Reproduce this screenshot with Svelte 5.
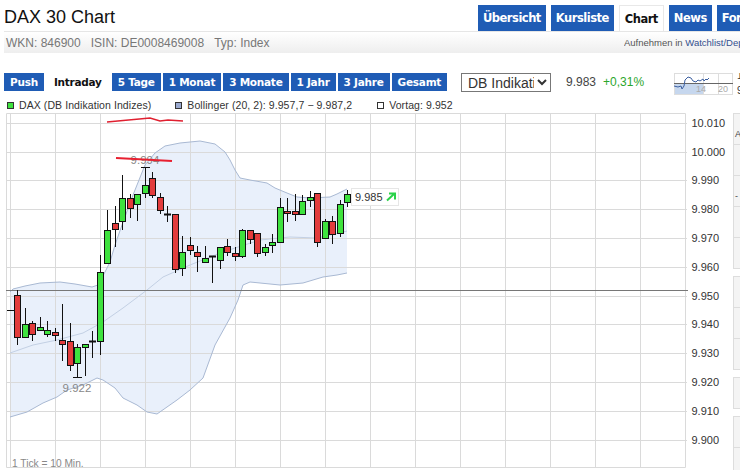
<script lang="ts">
	type Candle = [number, number, number, number, number, 'g' | 'r' | 'k'];

	const periods = ['Push', 'Intraday', '5 Tage', '1 Monat', '3 Monate', '1 Jahr', '3 Jahre', 'Gesamt'];
	const tabs = ['Übersicht', 'Kursliste', 'Chart', 'News', 'Forum'];

	const value = (v: number) => 151.5 + (10000 - v) * 2.88;
	const ticks = [10010, 10000, 9990, 9980, 9970, 9960, 9950, 9940, 9930, 9920, 9910, 9900];
	const fmt = (v: number) => String(v).replace(/(\d)(\d{3})$/, '$1.$2');
	const verticals = Array.from({ length: 15 }, (_, i) => 10 + i * 45);

	// x, wick top, wick bottom, body top, body bottom, colour
	const candles: Candle[] = [
		[17, 290, 345, 295, 337, 'r'],
		[25, 308, 337, 324, 337, 'g'],
		[32, 321, 341, 323, 334, 'r'],
		[40, 317, 331, 327, 330, 'g'],
		[47, 321, 337, 330, 334, 'g'],
		[55, 328, 341, 332, 335, 'r'],
		[62, 304, 361, 340, 344, 'r'],
		[70, 323, 371, 341, 365, 'r'],
		[77, 344, 377, 347, 363, 'g'],
		[85, 344, 376, 344, 347, 'g'],
		[92, 331, 358, 341, 341, 'k'],
		[100, 255, 355, 272, 341, 'g'],
		[107, 210, 263, 230, 263, 'g'],
		[115, 206, 247, 223, 229, 'r'],
		[122, 175, 230, 198, 221, 'g'],
		[130, 194, 218, 198, 208, 'r'],
		[137, 194, 221, 194, 204, 'g'],
		[145, 167, 198, 185, 193, 'g'],
		[152, 172, 198, 178, 195, 'r'],
		[160, 193, 214, 197, 210, 'r'],
		[167, 206, 222, 214, 214, 'k'],
		[175, 214, 273, 214, 269, 'r'],
		[182, 236, 276, 252, 268, 'g'],
		[190, 237, 255, 245, 250, 'r'],
		[197, 246, 272, 252, 256, 'r'],
		[205, 246, 262, 258, 262, 'g'],
		[212, 256, 283, 256, 256, 'k'],
		[220, 247, 269, 247, 260, 'g'],
		[227, 239, 256, 246, 252, 'r'],
		[235, 247, 261, 253, 256, 'r'],
		[242, 229, 258, 230, 256, 'g'],
		[250, 230, 244, 230, 239, 'r'],
		[257, 233, 257, 233, 253, 'r'],
		[265, 244, 256, 247, 252, 'g'],
		[272, 234, 253, 242, 245, 'g'],
		[280, 198, 242, 207, 242, 'g'],
		[287, 198, 222, 211, 213, 'r'],
		[295, 194, 221, 211, 214, 'r'],
		[302, 195, 214, 201, 214, 'g'],
		[310, 191, 207, 197, 200, 'g'],
		[317, 193, 247, 193, 242, 'r'],
		[325, 219, 238, 221, 238, 'g'],
		[332, 216, 244, 221, 234, 'r'],
		[340, 200, 237, 204, 233, 'g'],
		[347, 190, 207, 194, 202, 'g']
	];

	const upper =
		'10,292 13,289 25,286 40,283 60,282 75,284 92,287 98,285 105,272 110,262 115,245 122,225 133,195 145,165 155,153 165,146 180,143 200,141 215,144 225,152 230,160 235,170 240,178 250,180 267,183 275,188 287,193 297,197 310,198 330,197 337,194 347,189';
	const lower =
		'347,273 337,275 323,277 303,283 280,285 250,282 243,285 238,300 230,318 215,345 203,378 190,390 177,400 167,407 157,414 147,412 137,405 123,398 115,388 103,380 97,378 83,385 67,390 57,397 43,403 27,412 10,417';
	const middle =
		'10,353 33,345 57,340 83,333 103,322 123,308 147,290 163,277 190,265 215,255 235,248 260,240 290,237 317,238 343,232 347,231';
</script>

<div class="page">
	<header class="title-row">
		<h1>DAX 30 Chart</h1>
		<nav class="tabs">
			{#each tabs as t}
				<span class="tab" class:on={t === 'Chart'}>{t}</span>
			{/each}
		</nav>
	</header>

	<div class="info">
		<div class="codes">
			<span>WKN: 846900</span>
			<span>ISIN: DE0008469008</span>
			<span>Typ: Index</span>
		</div>
		<div class="watch">Aufnehmen in <span class="link">Watchlist/Depot</span></div>
	</div>

	<div class="toolbar">
		<div class="periods">
			{#each periods as p}
				<span class="period" class:on={p === 'Intraday'}>{p}</span>
			{/each}
		</div>
		<select class="source">
			<option>DB Indikation</option>
		</select>
		<span class="last">9.983</span>
		<span class="change">+0,31%</span>
		<svg class="mini" viewBox="0 0 66 22" width="66" height="22">
			<rect x="0" y="11" width="29" height="11" fill="#c6d7ee" />
			<path d="M0 .5H59M0 21.5H59M.5 0V22M29.5 0V22M44.5 0V22M58.5 0V22" stroke="#ddd" fill="none" />
			<path d="M0 10.5H59" stroke="#666" fill="none" />
			<path
				d="M0 13l4 1 3-1 1 3 2-3 1-6 3-3 3 1 2 3 3 1 2-2 2 1 3-2 1 2 2-2 1 1 2-2"
				stroke="#3c5fa0"
				fill="none"
			/>
			<text x="22" y="19" class="mini-label">14</text>
			<text x="44" y="19" class="mini-label">20</text>
			<text x="63" y="6" class="mini-scale">1</text>
			<text x="63" y="21" class="mini-scale">9</text>
		</svg>
	</div>

	<div class="legend">
		<span class="item"><i class="sq dax"></i>DAX (DB Indikation Indizes)</span>
		<span class="item boll"><i class="sq bb"></i>Bollinger (20, 2): 9.957,7 − 9.987,2</span>
		<span class="item prev"><i class="sq pv"></i>Vortag: 9.952</span>
	</div>

	<div class="chart-row">
		<svg class="chart" viewBox="0 113 733 357" width="733" height="357">
			<polygon points="{upper} {lower}" fill="#e9f0fb" />

			<g stroke="#dadada" fill="none">
				{#each ticks as t}
					<line x1="6" x2="687" y1={Math.round(value(t)) + 0.5} y2={Math.round(value(t)) + 0.5} />
				{/each}
				{#each verticals as x}
					<line x1={x + 0.5} x2={x + 0.5} y1="113" y2="467" />
				{/each}
				<path d="M6.5 467.5V113.5H685.5V467.5H6.5" />
			</g>

			<polyline points={upper} fill="none" stroke="#a9b9d3" />
			<polyline points={lower} fill="none" stroke="#a9b9d3" />
			<polyline points={middle} fill="none" stroke="#c3d0e4" />

			<line x1="6" x2="688" y1="290.5" y2="290.5" stroke="#777" />

			<path d="M7 310.5H14M73 377.5H82M141 167.5H150" stroke="#111" fill="none" />

			{#each candles as [x, wt, wb, bt, bb, c]}
				<line x1={x + 0.5} x2={x + 0.5} y1={wt} y2={wb} stroke="#111" />
				{#if c === 'k'}
					<line x1={x - 3} x2={x + 4} y1={bt + 0.5} y2={bt + 0.5} stroke="#111" stroke-width="2" />
				{:else}
					<rect
						x={x - 2.5}
						y={bt + 0.5}
						width="6"
						height={bb - bt}
						fill={c === 'g' ? '#3ee23e' : '#e23c3c'}
						stroke="#111"
					/>
				{/if}
			{/each}

			<text x="145" y="164" class="note" text-anchor="middle">9.994</text>
			<text x="77" y="392" class="note" text-anchor="middle">9.922</text>
			<text x="12" y="467" class="tick-note">1 Tick = 10 Min.</text>

			<path d="M107 122Q128 120 150 118L160 121 168 120 183 121" stroke="#e02030" stroke-width="1.5" fill="none" />
			<path d="M116 158L172 161" stroke="#e82030" stroke-width="2" fill="none" />

			<rect x="351.5" y="188.5" width="47" height="17" fill="#fff" stroke="#e6e6e6" />
			<text x="355" y="201" class="axis">9.985</text>
			<path d="M387 200.5L394 194M389 193.5H395V199.5" stroke="#2bd24a" stroke-width="2" fill="none" />

			{#each ticks as t}
				<text x="691.5" y={value(t) + 4} class="axis">{fmt(t)}</text>
			{/each}
		</svg>
		<aside class="side">
			<div class="side-box">
				<span class="row mark">A</span>
				<span class="row"></span>
				<span class="row mark">-</span>
				<span class="row"></span>
				<span class="row"></span>
			</div>
			<div class="side-box">
				<span class="row"></span>
				<span class="row"></span>
				<span class="row"></span>
			</div>
			<div class="side-box">
				<span class="row"></span>
			</div>
			<div class="side-box">
				<span class="row"></span>
				<span class="row"></span>
			</div>
		</aside>
	</div>
</div>

<style>
	:global(body) {
		margin: 0;
		background: #fff;
		font-family: "Liberation Sans", Arial, sans-serif;
		color: #222;
	}
	.page {
		width: 740px;
		height: 470px;
		overflow: hidden;
	}

	.title-row {
		display: flex;
		height: 31px;
		padding: 5px 0 0 4px;
		box-sizing: border-box;
		overflow: hidden;
	}
	h1 {
		flex: none;
		width: 474px;
		margin: 0;
		font-size: 18px;
		font-weight: 400;
		line-height: 24px;
		color: #111;
	}
	.tabs {
		display: flex;
		gap: 5px;
		flex: none;
	}
	.tab {
		display: flex;
		align-items: center;
		height: 26px;
		padding: 0 5px;
		background: #1f5cb5;
		color: #fff;
		font: bold 11.5px "DejaVu Sans", Verdana, sans-serif;
		letter-spacing: -0.5px;
	}
	.tab.on {
		background: #fff;
		color: #111;
		border: 1px solid #e8e8e8;
		border-bottom: 0;
		box-sizing: border-box;
		height: 27px;
	}

	.info {
		display: flex;
		justify-content: space-between;
		align-items: center;
		height: 21px;
		margin-left: 4px;
		padding: 0 0 0 2px;
		border-top: 1px solid #e6e6e6;
		background: linear-gradient(#fff, #eee);
		color: #777;
	}
	.codes {
		display: flex;
		gap: 10px;
		font-size: 12px;
	}
	.watch {
		font-size: 9.5px;
		color: #555;
		width: 116px;
		white-space: nowrap;
		overflow: hidden;
	}
	.link {
		color: #34508f;
	}

	.toolbar {
		display: flex;
		align-items: flex-start;
		height: 24px;
		margin-top: 20px;
		padding-left: 4px;
		white-space: nowrap;
	}
	.periods {
		display: flex;
		gap: 2px;
		width: 457px;
		flex: none;
	}
	.period {
		display: flex;
		align-items: center;
		height: 18px;
		padding: 0 6px;
		background: #1f5cb5;
		color: #fff;
		font: bold 10.5px "DejaVu Sans", Verdana, sans-serif;
		letter-spacing: -0.25px;
	}
	.period.on {
		padding: 0 8px;
		background: #fff;
		color: #111;
	}
	.source {
		width: 90px;
		height: 19px;
		padding: 0 0 0 2px;
		border: 1px solid #777;
		border-radius: 0;
		background: #fff;
		color: #333;
		font: 14px "Liberation Sans", Arial, sans-serif;
	}
	.last,
	.change {
		font-size: 12px;
		line-height: 18px;
		color: #444;
	}
	.last {
		margin-left: 15px;
	}
	.change {
		margin-left: 7px;
		color: #2ca62c;
	}
	.mini {
		flex: none;
		margin-left: 30px;
	}
	.mini-label {
		font-size: 9px;
		fill: #aaa;
	}
	.mini-scale {
		font-size: 10px;
		fill: #333;
	}

	.legend {
		display: flex;
		align-items: center;
		height: 16px;
		padding-left: 7px;
		font-size: 10.5px;
		letter-spacing: 0.08px;
		color: #333;
	}
	.item {
		display: flex;
		align-items: center;
		gap: 5px;
		white-space: nowrap;
	}
	.boll {
		margin-left: 24px;
	}
	.prev {
		margin-left: 25px;
	}
	.sq {
		width: 5px;
		height: 5px;
		border: 1px solid #333;
		display: block;
	}
	.dax {
		background: #3ee23e;
	}
	.bb {
		background: #9aa9cf;
	}
	.pv {
		background: #fff;
	}

	.chart-row {
		display: flex;
		height: 357px;
	}
	.chart {
		flex: none;
		display: block;
	}
	.note {
		font-size: 11.5px;
		fill: #888;
	}
	.tick-note {
		font-size: 10.2px;
		fill: #888;
	}
	.axis {
		font-size: 11px;
		fill: #333;
	}
	.side {
		flex: 1;
		display: flex;
		flex-direction: column;
		gap: 7px;
		min-width: 0;
	}
	.side-box {
		background: #f4f4f4;
		border-left: 1px solid #ddd;
		border-top: 1px solid #ddd;
		box-sizing: border-box;
	}
	.row {
		display: block;
		height: 31px;
		box-sizing: border-box;
		border-bottom: 1px solid #ddd;
		font-size: 9px;
		line-height: 9px;
		color: #444;
	}
	.mark {
		padding: 16px 0 0 1px;
	}
</style>
